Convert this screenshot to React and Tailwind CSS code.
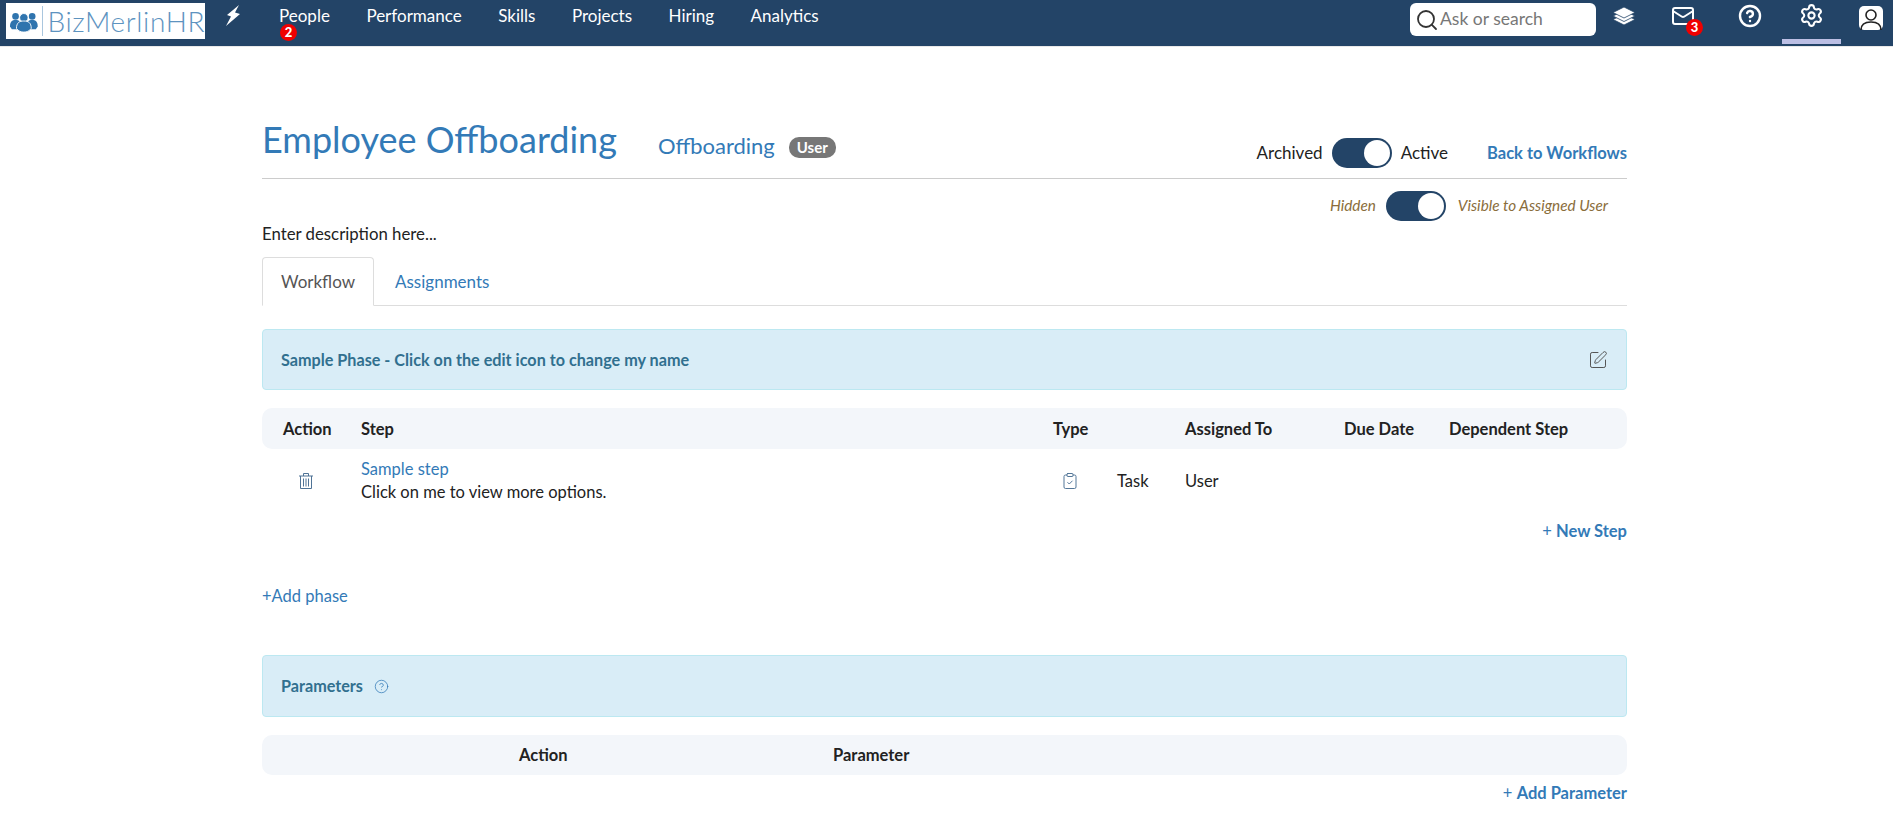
import { Mail, CircleHelp, Settings, Search, ClipboardCheck, SquarePen } from "lucide-react";

const navItems = [
  { label: "People", badge: "2" },
  { label: "Performance" },
  { label: "Skills" },
  { label: "Projects" },
  { label: "Hiring" },
  { label: "Analytics" },
];

const Badge = ({ value, className }) => (
  <span className={"absolute flex h-[17px] w-[17px] items-center justify-center rounded-full bg-[#f00000] text-[13px] font-black leading-none text-white " + className}>
    {value}
  </span>
);

const Toggle = () => (
  <span className="flex h-[30px] w-[60px] items-center justify-end rounded-full bg-[#234467] pr-[2px]">
    <span className="h-[26px] w-[26px] rounded-full bg-white" />
  </span>
);

const Logo = () => (
  <div className="flex h-[36px] w-[199px] items-center bg-white pl-[4px]">
    <svg width="33" height="26" viewBox="0 0 30 24" fill="#2f74ae">
      <circle cx="6" cy="7" r="3.6" />
      <circle cx="24" cy="7" r="3.6" />
      <path d="M0 18c0-5 2-7 6-7s6 2 6 7l-2 3H2z" />
      <path d="M18 18c0-5 2-7 6-7s6 2 6 7l-2 3h-8z" />
      <circle cx="15" cy="8.5" r="4.6" stroke="#fff" strokeWidth="1" />
      <path d="M7 20c0-6 3-8 8-8s8 2 8 8c-2 3-5 4-8 4s-6-1-8-4z" stroke="#fff" strokeWidth="1" />
    </svg>
    <span className="ml-[4px] h-[30px] w-px bg-[#a9c6de]" />
    <span className="ml-[5px] text-[28px] font-light leading-none tracking-[0.6px] text-[#5d93bf]">BizMerlinHR</span>
  </div>
);

const StackIcon = ({ className }) => (
  <svg width="24" height="20" viewBox="0 0 24 20" className={className} fill="white" stroke="#234467" strokeWidth="0.8">
    <path d="M1 13.5 12 8l11 5.5L12 19z" />
    <path d="M1 10 12 4.5 23 10 12 15.5z" />
    <path d="M1 6.5 12 1l11 5.5L12 12z" />
  </svg>
);

const BoltIcon = ({ className }) => (
  <svg width="18" height="22" viewBox="0 0 18 22" className={className} fill="white">
    <path d="M15 0 3 10l4 1.5L2 21l14-12-5-1.5L15 0z" />
  </svg>
);

const TrashIcon = ({ className }) => (
  <svg width="16" height="18" viewBox="0 0 16 18" className={className} fill="none" stroke="#4f7396" strokeWidth="1">
    <path d="M1 4h14M5.5 4V1.5h5V4" />
    <path d="M2.5 4v12.5h11V4" />
    <path d="M5.5 6.5v8M8 6.5v8M10.5 6.5v8" />
  </svg>
);

const Navbar = () => (
  <div className="flex h-[47px] items-start border-b border-[#e9e9e9] bg-[#234467] pl-[6px] pt-[3px] text-white">
    <Logo />
    <BoltIcon className="ml-[19px] mt-[2px]" />
    <div className="ml-[37px] mt-[4px] flex gap-[36.5px] text-[17px] leading-[18px]">
      {navItems.map((item) => (
        <span key={item.label} className="relative">
          {item.label}
          {item.badge && <Badge value={item.badge} className="left-[1px] top-[17px]" />}
        </span>
      ))}
    </div>
    <div className="ml-auto flex items-start">
      <div className="flex h-[33px] w-[186px] items-center gap-[1px] rounded-[6px] bg-white pl-[5px] text-[#333]">
        <Search size={24} strokeWidth={1.8} />
        <span className="text-[17.5px] text-[#777]">Ask or search</span>
      </div>
      <StackIcon className="ml-[16px] mt-[3px]" />
      <div className="relative ml-[35px] mt-[1px]">
        <Mail size={24} strokeWidth={2} />
        <Badge value="3" className="left-[15px] top-[15px]" />
      </div>
      <CircleHelp size={24} strokeWidth={2.4} className="ml-[43px] mt-[1px]" />
      <div className="ml-[20px] flex h-[41px] w-[59px] justify-center border-b-[5px] border-[#bcbfe4]">
        <Settings size={25} strokeWidth={2} />
      </div>
      <svg width="24" height="26" viewBox="0 0 24 26" className="ml-[18px] mr-[10px] mt-[3px]">
        <rect width="24" height="24" rx="5" fill="#fff" />
        <circle cx="12" cy="9" r="5" fill="none" stroke="#222" strokeWidth="1.6" />
        <path d="M2 24c0-6 4-8 10-8s10 2 10 8" fill="none" stroke="#222" strokeWidth="1.6" />
      </svg>
    </div>
  </div>
);

const Panel = ({ children }) => (
  <div className="flex items-center justify-between rounded-[4px] border border-[#bce8f1] bg-[#d9edf7] pl-[18px] pr-[18px] text-[16.2px] font-bold text-[#31708f]">
    {children}
  </div>
);

export default function App() {
  return (
    <div className="min-h-[826px] bg-white font-[family-name:Lato,sans-serif] text-[16.5px] text-[#222]">
      <Navbar />
      <div className="ml-[262px] w-[1365px] pb-[20px]">
        <div className="flex h-[132px] items-end border-b border-[#ccc]">
          <h1 className="mb-[17px] text-[36px] leading-[44px] text-[#337ab7]">Employee Offboarding</h1>
          <span className="mb-[17px] ml-[41px] text-[22px] leading-[30px] text-[#337ab7]">Offboarding</span>
          <span className="mb-[20px] ml-[14px] rounded-[10px] bg-[#777] px-[8px] py-[2px] text-[15px] font-bold leading-[17px] text-white">User</span>
          <div className="mb-[10px] ml-auto flex items-center">
            <span className="text-[17px]">Archived</span>
            <span className="mx-[9px]"><Toggle /></span>
            <span className="text-[17px]">Active</span>
            <span className="ml-[39px] font-bold text-[#337ab7]">Back to Workflows</span>
          </div>
        </div>
        <div className="mt-[11px] flex h-[31px] items-center justify-end pr-[19px] text-[15.3px] italic text-[#8a6d3b]">
          <span>Hidden</span>
          <span className="ml-[10px] mr-[12px]"><Toggle /></span>
          <span>Visible to Assigned User</span>
        </div>
        <p className="mt-[2px] text-[16.8px] leading-[22px]">Enter description here...</p>
        <div className="mt-[12px] flex h-[49px] border-b border-[#ddd] text-[17px]">
          <span className="flex h-[49px] w-[112px] items-center justify-center rounded-t-[4px] border border-b-white border-[#ddd] bg-white pt-[1px] text-[#555]">Workflow</span>
          <span className="ml-[21px] flex items-center pt-[1px] text-[#337ab7]">Assignments</span>
        </div>

        <div className="mt-[23px] h-[61px]">
          <Panel>
            <span className="flex h-[59px] items-center pt-[1px]">Sample Phase - Click on the edit icon to change my name</span>
            <SquarePen size={20} strokeWidth={1.2} className="text-[#555]" />
          </Panel>
        </div>

        <div className="mt-[18px] grid h-[41px] grid-cols-[99px_692px_132px_159px_105px_1fr] items-center rounded-[10px] bg-[#f3f6fa] pt-[1px] font-bold">
          <span className="pl-[21px]">Action</span>
          <span>Step</span>
          <span>Type</span>
          <span>Assigned To</span>
          <span>Due Date</span>
          <span>Dependent Step</span>
        </div>
        <div className="mt-[9px] grid h-[46px] grid-cols-[99px_692px_64px_68px_1fr] items-center">
          <TrashIcon className="ml-[36px]" />
          <div className="leading-[23px]">
            <div className="text-[#337ab7]">Sample step</div>
            <div>Click on me to view more options.</div>
          </div>
          <ClipboardCheck size={18} strokeWidth={1.3} className="ml-[8px] text-[#4f7396]" />
          <span>Task</span>
          <span>User</span>
        </div>
        <div className="mt-[16px] text-right font-bold leading-[22px] text-[#337ab7]">
          <span className="font-normal">+ </span>New Step
        </div>
        <div className="mt-[43px] leading-[22px] text-[#337ab7]">+Add phase</div>

        <div className="mt-[48px] h-[62px]">
          <Panel>
            <span className="flex h-[60px] items-center gap-[11px]">
              Parameters
              <CircleHelp size={15} strokeWidth={1.2} className="text-[#337ab7]" />
            </span>
          </Panel>
        </div>
        <div className="mt-[18px] grid h-[40px] grid-cols-[571px_1fr] items-center rounded-[10px] bg-[#f3f6fa] font-bold">
          <span className="pl-[257px]">Action</span>
          <span>Parameter</span>
        </div>
        <div className="mt-[7px] text-right font-bold leading-[22px] text-[#337ab7]">
          <span className="font-normal">+ </span>Add Parameter
        </div>
      </div>
    </div>
  );
}
